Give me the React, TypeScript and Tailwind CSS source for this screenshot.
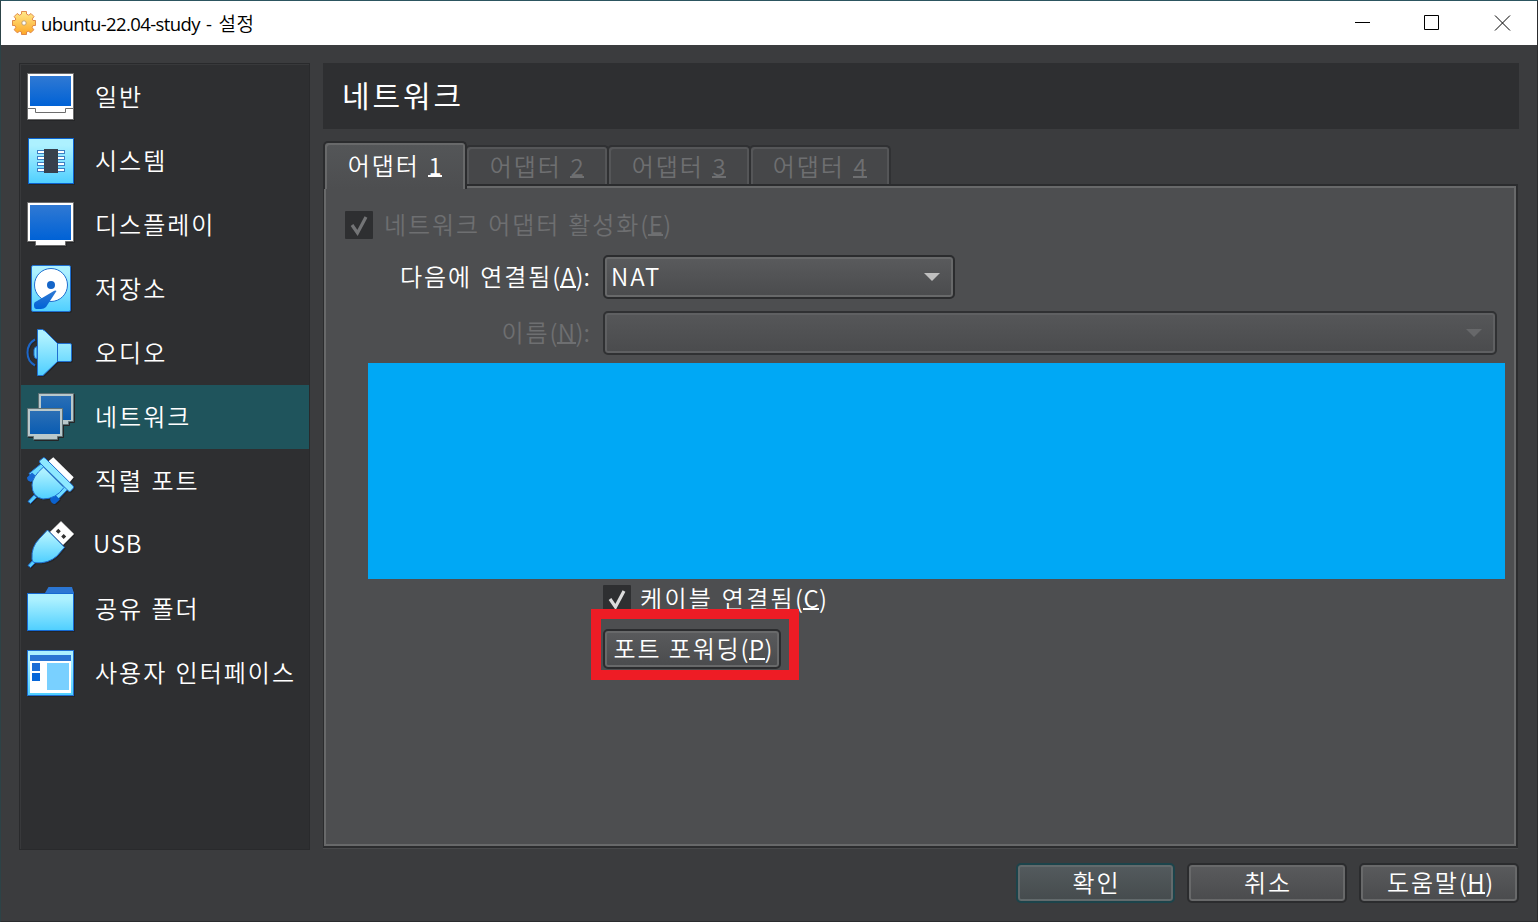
import React from "react";

const INK = "#1f6fd0";

function GeneralIcon() {
  return (
    <g>
      <rect x="0.5" y="0.5" width="46" height="46" fill="#fff" stroke="#6d6d6d" />
      <rect x="3" y="3" width="41" height="30" fill="url(#screen)" />
      <path d="M0 35.5H8.500V39.500H38.500V35.500H47" fill="none" stroke="#6d6d6d" />
    </g>
  );
}

function SystemIcon() {
  return (
    <g>
      <rect x="1.500" y="1.500" width="45" height="45" fill="url(#sky)" stroke="#0b62cf" />
      {[13, 19, 25, 31].map((y) => (
        <rect key={y} x="10.500" y={y + 0.500} width="27" height="3" fill="#fff" stroke="#3d7fc4" />
      ))}
      <rect x="17" y="12" width="14" height="24" fill="#37404c" />
    </g>
  );
}

function DisplayIcon() {
  return (
    <g>
      <path d="M0.500 1.500H46.500V40.500H38.500V44.500H8.500V40.500H0.500Z" fill="#fff" stroke="#6d6d6d" />
      <rect x="3" y="4" width="41" height="35" fill="url(#screen)" />
    </g>
  );
}

function StorageIcon() {
  return (
    <g>
      <rect x="4.500" y="0.500" width="39" height="46" rx="1.500" fill="url(#sky)" stroke={INK} />
      <circle cx="24" cy="20" r="16.500" fill="#fff" stroke={INK} />
      <circle cx="24" cy="20" r="4" fill="#1565c8" />
      <path d="M29.500 26L19 42Q17 44 14 44H9Q7 43.500 7 41V39Q7 37 10 36L26 26.500Q28.500 25 29.500 26Z" fill="url(#screen)" />
    </g>
  );
}

function AudioIcon() {
  return (
    <g>
      <path d="M8 10.500C-2 16 -2 31 8 36.500" fill="none" stroke="#1c66c8" strokeWidth="2" />
      <path d="M10 17.500Q7 18 7 21V26Q7 29.500 10 30Z" fill="#6bd6ff" stroke={INK} />
      <path d="M10.500 0.500H15.500L18 2L30.500 14.500H43Q44.500 14.500 44.500 16V31Q44.500 32.500 43 32.500H30.500L16 46.500H10.500Z" fill="url(#sky)" stroke={INK} />
      <path d="M30.500 14V33" stroke={INK} />
    </g>
  );
}

function NetworkIcon() {
  return (
    <g>
      <path d="M11.500 0.500H46.500V28.500H41.500V31.500H20V28.500H11.500Z" fill="#b9c8cb" stroke="#5f7175" />
      <rect x="14" y="3" width="30" height="24" fill="url(#dimScreen)" />
      <path d="M0.500 15.500H35.500V43.500H30.500V46.500H6.500V43.500H0.500Z" fill="#b9c8cb" stroke="#5f7175" />
      <rect x="3" y="18" width="30" height="23" fill="url(#dimScreen)" />
    </g>
  );
}

function SerialIcon() {
  return (
    <g strokeLinejoin="round">
      <path d="M20.500 5L26.300 0.300L46.700 20.300L42.500 25.500Z" fill="#fff" />
      <path d="M15 6L19 10L7 22L2 16.500Z" fill="#6fdcff" stroke={INK} />
      <path d="M0 20.500L5 15.500L9.500 19.500L4 25Q0 24 0 20.500Z" fill="#1769d4" />
      <path d="M37 28L41 32L28.500 45L23.500 40.500Z" fill="#6fdcff" stroke={INK} />
      <path d="M27.500 37L33 42.500L28 47Q24 47 23 42Z" fill="#0b62cf" />
      <path d="M1 44.500L7 38L9.500 40.500L3.500 46.500Z" fill="#57cfff" stroke={INK} />
      <path d="M16.500 10L37 30.500Q29 42 16 42Q5 40 5 28Q5 20 16.500 10Z" fill="url(#sky)" stroke={INK} />
      <path d="M12.300 4L16.300 0.700Q18 0.500 19 2L46.300 29Q47 31 46 31.500L43.500 34.200Q42 35 41 33.500L13 6Z" fill="#8de8ff" stroke={INK} />
    </g>
  );
}

function UsbIcon() {
  return (
    <g strokeLinejoin="round">
      <path d="M23 11L34 0.300L47 13L36 24Z" fill="#fff" stroke="#aaa" strokeWidth="0.500" />
      <path d="M31.300 7.800L33.800 10.300L31.300 12.800L28.800 10.300ZM36.700 13L39.200 15.500L36.700 18L34.200 15.500Z" fill="#333" />
      <path d="M1 44.500L6.500 38.500L9 41L3.500 46.500Z" fill="#57cfff" stroke={INK} />
      <path d="M20.500 9L37.500 26.300L30 35Q21 43 8 41.700Q5 41.500 5 38Q4 26 12.500 17.500Z" fill="url(#sky)" stroke={INK} />
    </g>
  );
}

function FolderIcon() {
  return (
    <g>
      <path d="M18 8L21.500 2H45L47 8Z" fill="#2b76d3" />
      <rect x="0.500" y="8.500" width="46" height="37" fill="url(#sky)" stroke="#1569d2" />
    </g>
  );
}

function InterfaceIcon() {
  return (
    <g>
      <rect x="0.500" y="1.500" width="46" height="45" fill="url(#sky)" stroke={INK} />
      <rect x="3" y="6" width="41" height="38" fill="#fff" />
      <rect x="3" y="6" width="41" height="6" fill="#2b76d3" />
      <rect x="5" y="14" width="8" height="8" fill="#1d6dd5" />
      <rect x="5" y="24" width="8" height="8" fill="#0766d8" />
      <rect x="20" y="14" width="22" height="27" fill="#79d0ff" />
    </g>
  );
}

const items: { label: string; icon: React.ReactNode; selected?: boolean }[] = [
  { label: "일반", icon: <GeneralIcon /> },
  { label: "시스템", icon: <SystemIcon /> },
  { label: "디스플레이", icon: <DisplayIcon /> },
  { label: "저장소", icon: <StorageIcon /> },
  { label: "오디오", icon: <AudioIcon /> },
  { label: "네트워크", icon: <NetworkIcon />, selected: true },
  { label: "직렬 포트", icon: <SerialIcon /> },
  { label: "USB", icon: <UsbIcon /> },
  { label: "공유 폴더", icon: <FolderIcon /> },
  { label: "사용자 인터페이스", icon: <InterfaceIcon /> },
];

function Gradients() {
  return (
    <defs>
      <linearGradient id="screen" x1="0" y1="0" x2="0" y2="1">
        <stop offset="0" stopColor="#3079d3" />
        <stop offset="1" stopColor="#0062d6" />
      </linearGradient>
      <linearGradient id="dimScreen" x1="0" y1="0" x2="0" y2="1">
        <stop offset="0" stopColor="#2b6fb5" />
        <stop offset="1" stopColor="#0a5cb2" />
      </linearGradient>
      <linearGradient id="sky" x1="0" y1="0" x2="0" y2="1">
        <stop offset="0.150" stopColor="#adf1ff" />
        <stop offset="1" stopColor="#4fcfff" />
      </linearGradient>
    </defs>
  );
}

function Gear() {
  return (
    <svg className="h-6 w-6" viewBox="0 0 24 24">
      <defs>
        <linearGradient id="gold" x1="0" y1="0" x2="0" y2="1">
          <stop offset="0" stopColor="#ffe98a" />
          <stop offset="1" stopColor="#fda726" />
        </linearGradient>
      </defs>
      <path
        d="M9.500 0.500H14.500V3L16.800 4.200L19 2.500L22 5.500L20.300 8L21 9.500H23.500V14.500H21L20.200 16.500L21.800 18.800L18.800 21.800L16.300 20.300L14.500 21V23.500H9.500V21L7.700 20.300L5.200 21.800L2.200 18.800L3.800 16.500L3 14.500H0.500V9.500H3L3.800 8L2.200 5.500L5.200 2.500L7.500 4.200L9.500 3Z"
        fill="url(#gold)" stroke="#dc8040" strokeWidth="0.900" strokeLinejoin="round"
      />
      <circle cx="12" cy="12" r="2.200" fill="#fff" stroke="#b79a6c" strokeWidth="0.900" />
    </svg>
  );
}

function Key({ children }: { children: string }) {
  return (
    <span className="inline-block h-[25px] min-w-[14px] border-b-2 border-current px-[0.5px] text-center leading-[25px] tracking-normal">{children}</span>
  );
}

function Hotkey({ children, colon = false }: { children: string; colon?: boolean }) {
  return (
    <span className="tracking-normal">(<Key>{children}</Key>){colon ? ":" : ""}</span>
  );
}

function Tab({ n, active = false, last = false }: { n: number; active?: boolean; last?: boolean }) {
  return (
    <div
      className={
        (active
          ? "relative z-10 -mb-1 h-12 w-36 border-[#2b2c2e] bg-linear-to-b from-[#545658] to-[#4d4e50] pt-[8px] text-white shadow-[inset_2px_2px_#68696a,inset_-2px_0_#68696a] "
          : "-ml-[2px] h-10 border-[#303133] bg-[#464749] pt-[5px] text-[#6e6f71] shadow-[inset_2px_2px_#555658,inset_-2px_0_#555658] ") +
        (last ? "w-[142px] " : "w-36 ") +
        "flex justify-center rounded-t-[5px] border-x-2 border-t-2"
      }
    >
      <span className="h-[27px] leading-[27px]">어댑터 <Key>{String(n)}</Key></span>
    </div>
  );
}

function Checkbox({ dim = false }: { dim?: boolean }) {
  return (
    <svg className="h-7 w-7 shrink-0" viewBox="0 0 28 28">
      <rect width="28" height="28" rx="1" fill="#2e2f31" />
      <path d="M7 14L12.500 22L21 6" fill="none" stroke={dim ? "#737476" : "#dcdcdc"} strokeWidth="3.200" />
    </svg>
  );
}

function Arrow({ dim = false }: { dim?: boolean }) {
  return (
    <svg className="h-2 w-4" viewBox="0 0 16 8">
      <path d="M0 0H16L8 8Z" fill={dim ? "#67686a" : "#bfbfbf"} />
    </svg>
  );
}

function Button({ children, className }: { children: React.ReactNode; className: string }) {
  return (
    <button className={"flex shrink-0 items-center justify-center rounded-[5px] border-2 bg-linear-to-b whitespace-pre " + className}>
      <span className="pb-[2px] pl-[2px]">{children}</span>
    </button>
  );
}

export default function App() {
  return (
    <div className="relative flex h-[922px] w-[1538px] flex-col overflow-hidden border border-[#2b2c2e] border-l-[#2c4347] border-t-[#2c5560] bg-[#3b3c3e] font-['Noto_Sans_CJK_KR',sans-serif] text-[24px] font-[350] tracking-[1.9px] [word-spacing:1px] whitespace-nowrap text-white">
      <header className="flex h-11 shrink-0 items-center bg-white pl-[10.5px] text-black">
        <Gear />
        <span className="ml-[5.500px] flex items-center text-[19px] font-[350] tracking-[0.5px]">
          <span className="mr-[7px] pt-px font-['Open_Sans',sans-serif] text-[18.5px] font-normal tracking-[-0.6px] [word-spacing:2px]">ubuntu-22.04-study -</span>설정
        </span>
        <svg className="mr-[26px] ml-auto h-4 w-[156px]" viewBox="0 0 156 16" fill="none" stroke="#000">
          <path d="M0 7.500H15M69.500 0.500H83.500V14.500H69.500Z" />
          <path d="M140 0.500L155 15.500M155 0.500L140 15.500" />
        </svg>
      </header>

      <div className="flex h-[787px] shrink-0 pl-[18px] mt-[18px]">
        <aside className="flex w-[291px] shrink-0 flex-col border border-[#292a2c] bg-[#2e2f31] pt-px pl-px shadow-[inset_1px_1px_#38393b]">
          <svg className="absolute h-0 w-0"><Gradients /></svg>
          {items.map((item) => (
            <div
              key={item.label}
              className={
                item.selected
                  ? "flex h-16 shrink-0 items-center bg-[#1f545c] pl-[6px]"
                  : "flex h-16 shrink-0 items-center pl-[6px]"
              }
            >
              <svg className="h-12 w-12 shrink-0 overflow-visible drop-shadow-[1px_1px_0_#242527]" viewBox="0 0 48 48">{item.icon}</svg>
              <span className={item.label === "USB" ? "ml-[18px] pb-[4px] tracking-[0.8px]" : "ml-5 pb-[2px] tracking-[2px]"}>{item.label}</span>
            </div>
          ))}
        </aside>

        <main className="ml-[13px] flex w-[1196px] flex-col">
          <h1 className="flex h-[66px] shrink-0 items-center bg-[#2e2f31] pb-[3px] pl-[19px] text-[30px] font-normal tracking-[2.9px]">네트워크</h1>
          <div className="mt-[12px] flex h-11 shrink-0 items-end">
            {[1, 2, 3, 4].map((n) => <Tab key={n} n={n} active={n === 1} last={n === 4} />)}
          </div>
          <section className="-mt-px h-[664px] w-[1195px] shrink-0 border-2 border-l border-[#2b2c2e] bg-[#4d4e50] shadow-[0_1px_#48494b]">
            <div className="relative h-full border-2 border-[#68696a] pt-[23px] pl-[19px]">
              <div className="flex h-7 items-center gap-[11px] text-[#6e6f71]">
                <Checkbox dim />
                <span className="pb-[2px]">네트워크 어댑터 활성화<Hotkey>E</Hotkey></span>
              </div>
              <div className="mt-4 flex h-11 items-center">
                <span className="w-[246px] pr-px pb-[2px] text-right">다음에 연결됨<Hotkey colon>A</Hotkey></span>
                <div className="ml-3 flex h-11 w-[352px] items-center justify-between rounded-[5px] border-2 border-[#2b2c2e] bg-linear-to-b from-[#5a5b5d] to-[#4a4b4d] pr-[13px] pl-[6px] shadow-[inset_0_0_0_2px_#68696a]">
                  <span className="pb-[3px]">NAT</span><Arrow />
                </div>
              </div>
              <div className="mt-3 flex h-11 items-center text-[#6e6f71]">
                <span className="w-[246px] pr-px pb-[2px] text-right">이름<Hotkey colon>N</Hotkey></span>
                <div className="ml-3 flex h-11 w-[894px] items-center justify-end rounded-[5px] border-2 border-[#303133] bg-linear-to-b from-[#565759] to-[#4a4b4d] pr-[13px] shadow-[inset_0_0_0_2px_#5f6062]">
                  <Arrow dim />
                </div>
              </div>
              <div className="mt-2 ml-[23px] h-[216px] w-[1137px] bg-[#00a8f5]" />
              <div className="mt-[6px] ml-[258px] flex h-7 items-center gap-[9px]">
                <Checkbox />
                <span className="pb-[2px] tracking-[2.3px]">케이블 연결됨<Hotkey>C</Hotkey></span>
              </div>
              <div className="mt-4 ml-[258px]">
                <Button className="h-10 w-[178px] border-[#2b2c2e] from-[#5a5b5d] to-[#4a4b4d] shadow-[inset_0_0_0_2px_#68696a]">
                  포트 포워딩<Hotkey>P</Hotkey>
                </Button>
              </div>
              <div className="absolute top-[421px] left-[265px] h-[71px] w-[208px] border-10 border-[#ee1c25]" />
            </div>
          </section>
        </main>
      </div>

      <footer className="mt-[13px] flex h-10 shrink-0 justify-end gap-[12px] pr-[18px]">
        <Button className="h-10 w-[159px] border-[#1c444b] from-[#545b5e] to-[#454b4d] shadow-[inset_0_0_0_2px_#626a6c]">확인</Button>
        <Button className="h-10 w-[160px] border-[#2b2c2e] from-[#5a5b5d] to-[#4a4b4d] shadow-[inset_0_0_0_2px_#68696a]">취소</Button>
        <Button className="h-10 w-[160px] border-[#2b2c2e] from-[#5a5b5d] to-[#4a4b4d] shadow-[inset_0_0_0_2px_#68696a]">
          도움말<Hotkey>H</Hotkey>
        </Button>
      </footer>
      <svg className="absolute -bottom-px left-[521px] h-px w-[301px]" viewBox="0 0 301 1">
        {[0, 8, 19, 50, 73, 80, 197, 203, 220, 231, 249, 255, 261, 278, 287, 298].map((x) => (
          <rect key={x} x={x} width="2" height="1" fill="#a0a1a2" />
        ))}
      </svg>
    </div>
  );
}
